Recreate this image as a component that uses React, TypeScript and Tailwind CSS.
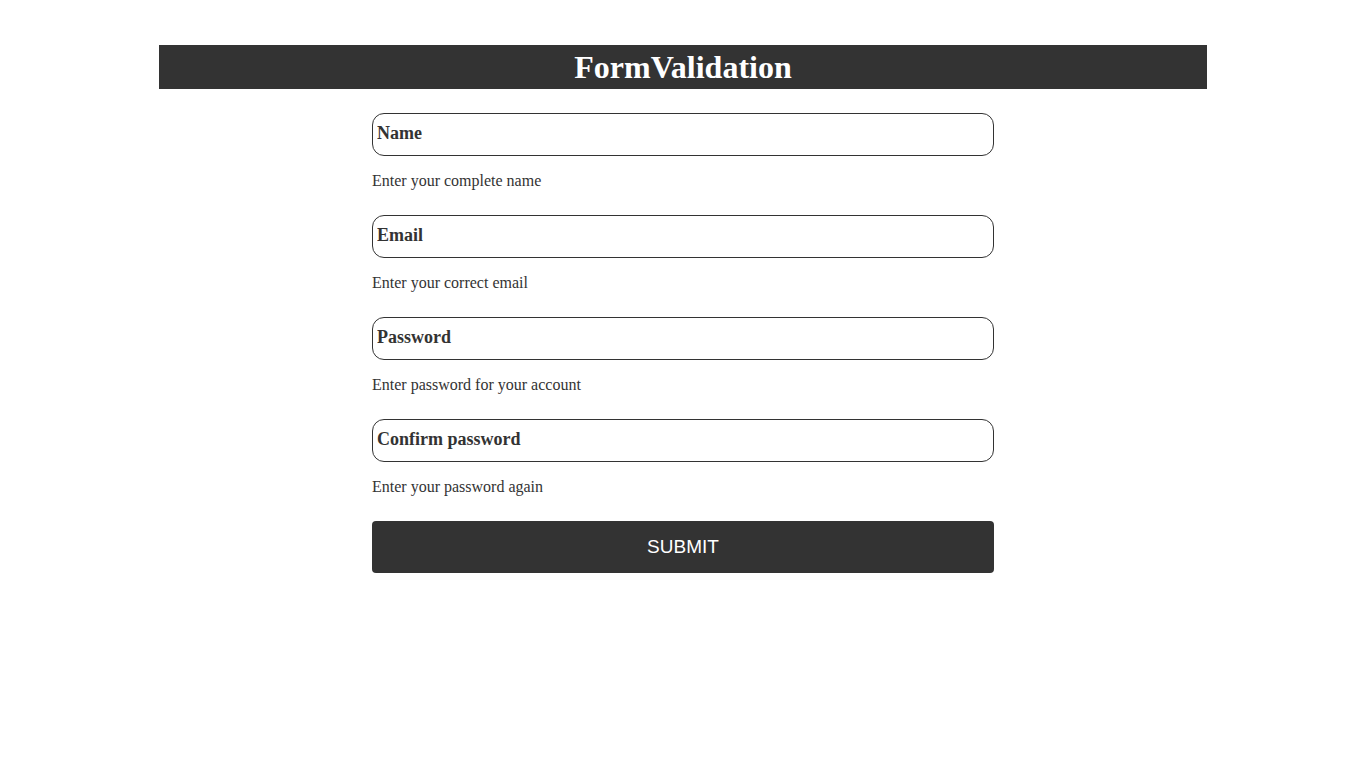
const fields = [
  { label: "Name", hint: "Enter your complete name", type: "text" },
  { label: "Email", hint: "Enter your correct email", type: "email" },
  { label: "Password", hint: "Enter password for your account", type: "password" },
  { label: "Confirm password", hint: "Enter your password again", type: "password" },
]

export default function App() {
  return (
    <div className="min-h-screen bg-white pt-[45px] font-['Liberation_Serif',serif] text-[#333]">
      <header className="mx-auto w-[1048px] h-[44px] bg-[#333] flex items-center justify-center">
        <h1 className="text-[32px] font-bold text-white leading-none">FormValidation</h1>
      </header>
      <form className="mx-auto w-[622px] mt-[24px]" onSubmit={(e) => e.preventDefault()}>
        {fields.map((f) => (
          <div key={f.label} className="mb-[25px]">
            <input
              type={f.type}
              placeholder={f.label}
              className="block w-full h-[43px] border border-[#333] rounded-[12px] pl-[4px] pb-[2px] text-[18px] font-bold text-[#333] placeholder:text-[#333] outline-none"
            />
            <p className="mt-[16px] text-[16px] leading-[18px] h-[18px]">{f.hint}</p>
          </div>
        ))}
        <button
          type="submit"
          className="block w-full h-[52px] bg-[#333] rounded-[4px] text-white text-[19px] font-['Liberation_Sans',Arial,sans-serif]"
        >
          SUBMIT
        </button>
      </form>
    </div>
  )
}
